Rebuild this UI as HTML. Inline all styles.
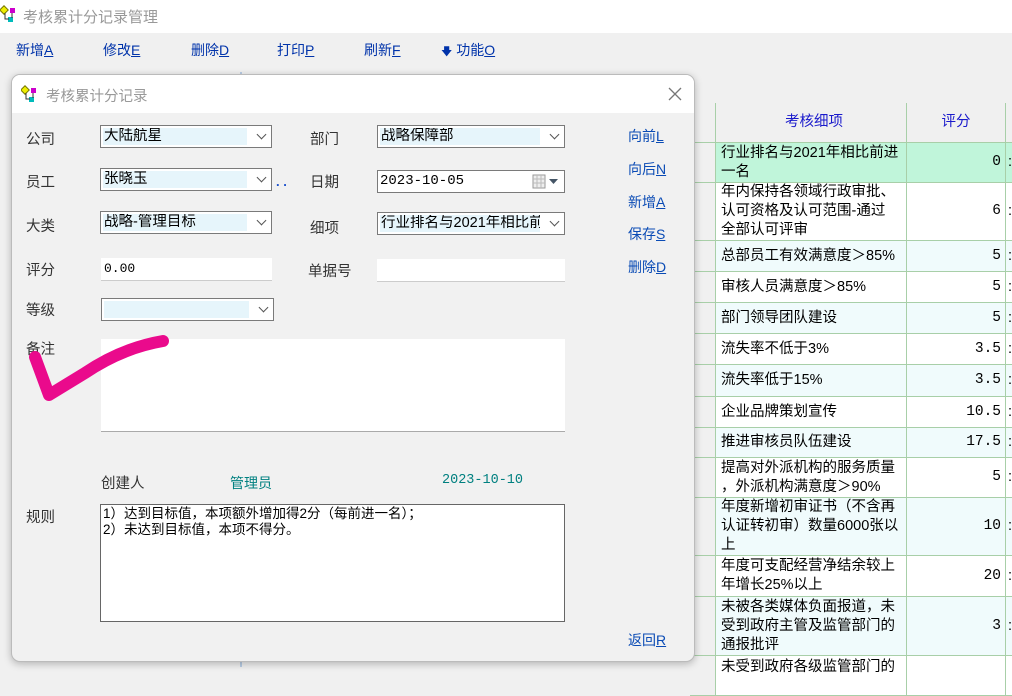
<!DOCTYPE html>
<html><head><meta charset="utf-8"><style>
*{box-sizing:border-box;margin:0;padding:0}
body{width:1012px;height:667px;overflow:hidden;background:#f0f0f0;font-family:"Liberation Sans","Noto Sans CJK SC","WenQuanYi Zen Hei",sans-serif;font-size:14px;color:#000;position:relative}
.a{position:absolute}
.title{left:0;top:0;width:1012px;height:33px;background:#fff;color:#999;font-size:15px}
.tb{top:40px;color:#0033aa;font-size:14px}
.tb u{text-decoration:underline}
.r{position:absolute;left:690px;width:330px;border-bottom:1px solid #a8cfa8;font-size:14.5px;line-height:19px;white-space:nowrap}
.r .l{position:absolute;left:0;top:0;bottom:0;width:26px;background:#f0f0f0;border-right:1px solid #a8cfa8}
.r .d{position:absolute;left:31px;top:0;bottom:0;width:186px;display:flex;align-items:center;overflow:hidden}
.r .s{position:absolute;left:216px;top:0;bottom:0;width:100px;border-left:1px solid #a8cfa8;border-right:1px solid #a8cfa8;display:flex;align-items:center;justify-content:flex-end;padding-right:4px;font-family:"Liberation Mono",monospace}
.r .x{position:absolute;left:318px;top:0;bottom:0;display:flex;align-items:center}
.dlg{left:11px;top:74px;width:684px;height:588px;background:#f1f1f1;border:1px solid #bbb;border-radius:9px;box-shadow:0 2px 8px rgba(0,0,0,.25);overflow:hidden}
.dt{left:0;top:0;width:684px;height:38px;background:#fff}
.lbl{color:#333;font-size:14.5px}
.cb{height:23px;border:1px solid #7a7a7a;background:#fff}
.cb .in{position:absolute;left:2px;top:2px;bottom:2px;right:24px;background:#e6f5fb;padding-left:1px;line-height:17px;font-size:14.5px;white-space:nowrap;overflow:hidden}
.cb .ar{position:absolute;right:6px;top:5px;width:7px;height:7px;border-right:1px solid #555;border-bottom:1px solid #555;transform:rotate(45deg)}
.tx{height:23px;background:#fff;border-bottom:1px solid #ccc}
.lk{color:#0a4bb5;font-size:14px}
.lk u{text-decoration:underline}
</style></head><body>
<div class="a title">
<svg class="a" style="left:0;top:4px" width="20" height="20"><rect x="1" y="3" width="6" height="6" fill="#ee0" stroke="#770" transform="rotate(45 4 6)"/><rect x="10" y="4" width="5" height="5" fill="#c0c"/><rect x="8" y="13" width="5" height="5" fill="#0bb"/><path d="M5 9v6h4M12 9v5" stroke="#333" fill="none"/></svg>
<span class="a" style="left:23px;top:6px">考核累计分记录管理</span></div>
<div class="a tb" style="left:16px">新增<u>A</u></div>
<div class="a tb" style="left:103px">修改<u>E</u></div>
<div class="a tb" style="left:191px">删除<u>D</u></div>
<div class="a tb" style="left:277px">打印<u>P</u></div>
<div class="a tb" style="left:364px">刷新<u>F</u></div>
<div class="a tb" style="left:441px"><span style="font-size:11px">🡇</span> 功能<u>O</u></div>
<div class="a" style="left:240px;top:72px;width:2px;height:595px;background:#b8cce4"></div>

<div class="a" style="left:690px;top:103px;width:330px;height:564px;background:#fff;border-top:1px solid #a8cfa8"></div>
<div class="r" style="top:103px;height:40px;background:#f0f0f0"><div class="l"></div><div class="d" style="justify-content:center;color:#1a1acc">考核细项</div><div class="s" style="justify-content:center;font-family:inherit;color:#1a1acc;padding:0">评分</div></div>
<div class="r" style="top:143px;height:40px;background:#c0f5da"><div class="l"></div><div class="d">行业排名与2021年相比前进<br>一名</div><div class="s">0</div><div class="x">:</div></div>
<div class="r" style="top:183px;height:58px;background:#fff"><div class="l"></div><div class="d">年内保持各领域行政审批、<br>认可资格及认可范围-通过<br>全部认可评审</div><div class="s">6</div><div class="x">:</div></div>
<div class="r" style="top:241px;height:31px;background:#f0fbfc"><div class="l"></div><div class="d">总部员工有效满意度＞85%</div><div class="s">5</div><div class="x">:</div></div>
<div class="r" style="top:272px;height:31px;background:#fff"><div class="l"></div><div class="d">审核人员满意度＞85%</div><div class="s">5</div><div class="x">:</div></div>
<div class="r" style="top:303px;height:31px;background:#f0fbfc"><div class="l"></div><div class="d">部门领导团队建设</div><div class="s">5</div><div class="x">:</div></div>
<div class="r" style="top:334px;height:31px;background:#fff"><div class="l"></div><div class="d">流失率不低于3%</div><div class="s">3.5</div><div class="x">:</div></div>
<div class="r" style="top:365px;height:32px;background:#f0fbfc"><div class="l"></div><div class="d">流失率低于15%</div><div class="s">3.5</div><div class="x">:</div></div>
<div class="r" style="top:397px;height:31px;background:#fff"><div class="l"></div><div class="d">企业品牌策划宣传</div><div class="s">10.5</div><div class="x">:</div></div>
<div class="r" style="top:428px;height:30px;background:#f0fbfc"><div class="l"></div><div class="d">推进审核员队伍建设</div><div class="s">17.5</div><div class="x">:</div></div>
<div class="r" style="top:458px;height:40px;background:#fff"><div class="l"></div><div class="d">提高对外派机构的服务质量<br>，外派机构满意度＞90%</div><div class="s">5</div><div class="x">:</div></div>
<div class="r" style="top:498px;height:58px;background:#f0fbfc"><div class="l"></div><div class="d">年度新增初审证书（不含再<br>认证转初审）数量6000张以<br>上</div><div class="s">10</div><div class="x">:</div></div>
<div class="r" style="top:556px;height:41px;background:#fff"><div class="l"></div><div class="d">年度可支配经营净结余较上<br>年增长25%以上</div><div class="s">20</div><div class="x">:</div></div>
<div class="r" style="top:597px;height:59px;background:#f0fbfc"><div class="l"></div><div class="d">未被各类媒体负面报道，未<br>受到政府主管及监管部门的<br>通报批评</div><div class="s">3</div><div class="x">:</div></div>
<div class="r" style="top:656px;height:40px;background:#fff"><div class="l"></div><div class="d" style="align-items:flex-start;padding-top:2px">未受到政府各级监管部门的</div><div class="s"></div></div>

<div class="a dlg">
<div class="a dt">
<svg class="a" style="left:9px;top:9px" width="20" height="20"><rect x="1" y="3" width="6" height="6" fill="#ee0" stroke="#770" transform="rotate(45 4 6)"/><rect x="10" y="4" width="5" height="5" fill="#c0c"/><rect x="8" y="13" width="5" height="5" fill="#0bb"/><path d="M5 9v6h4M12 9v5" stroke="#333" fill="none"/></svg>
<span class="a" style="left:34px;top:10px;color:#999;font-size:14.5px">考核累计分记录</span>
<svg class="a" style="left:655px;top:11px" width="16" height="16"><path d="M2 2L14 14M14 2L2 14" stroke="#777" stroke-width="1.3"/></svg>
</div>
<div class="a lbl" style="left:14px;top:53px">公司</div>
<div class="a lbl" style="left:14px;top:96px">员工</div>
<div class="a lbl" style="left:14px;top:140px">大类</div>
<div class="a lbl" style="left:14px;top:184px">评分</div>
<div class="a lbl" style="left:14px;top:224px">等级</div>
<div class="a lbl" style="left:14px;top:263px">备注</div>
<div class="a lbl" style="left:14px;top:431px">规则</div>

<div class="a cb" style="left:88px;top:50px;width:172px"><div class="in">大陆航星</div><div class="ar"></div></div>
<div class="a cb" style="left:88px;top:93px;width:172px"><div class="in">张晓玉</div><div class="ar"></div></div>
<div class="a" style="left:264px;top:99px;color:#1a4fcc;font-weight:bold;font-size:13px">. .</div>
<div class="a cb" style="left:88px;top:136px;width:172px"><div class="in">战略-管理目标</div><div class="ar"></div></div>
<div class="a tx" style="left:89px;top:183px;width:171px;padding:3px 3px;font-family:'Liberation Mono',monospace;font-size:13px">0.00</div>
<div class="a cb" style="left:89px;top:223px;width:173px"><div class="in"></div><div class="ar"></div></div>

<div class="a lbl" style="left:298px;top:53px">部门</div>
<div class="a lbl" style="left:298px;top:96px">日期</div>
<div class="a lbl" style="left:298px;top:142px">细项</div>
<div class="a lbl" style="left:296px;top:185px">单据号</div>
<div class="a cb" style="left:365px;top:50px;width:188px"><div class="in">战略保障部</div><div class="ar"></div></div>
<div class="a cb" style="left:365px;top:95px;width:188px;padding:2px 2px;font-family:'Liberation Mono',monospace;font-size:14px">2023-10-05
<svg class="a" style="left:154px;top:3px" width="32" height="16"><rect x="1" y="1" width="12" height="13" fill="#eee" stroke="#999"/><path d="M1 5h12M1 9h12M5 1v13M9 1v13" stroke="#bbb"/><path d="M17 5h9l-4.5 5z" fill="#456"/></svg></div>
<div class="a cb" style="left:365px;top:137px;width:188px"><div class="in">行业排名与2021年相比前</div><div class="ar"></div></div>
<div class="a tx" style="left:365px;top:184px;width:188px"></div>

<div class="a lk" style="left:616px;top:51px">向前<u>L</u></div>
<div class="a lk" style="left:616px;top:84px">向后<u>N</u></div>
<div class="a lk" style="left:616px;top:117px">新增<u>A</u></div>
<div class="a lk" style="left:616px;top:149px">保存<u>S</u></div>
<div class="a lk" style="left:616px;top:182px">删除<u>D</u></div>
<div class="a lk" style="left:616px;top:555px">返回<u>R</u></div>

<div class="a" style="left:89px;top:264px;width:464px;height:93px;background:#fff;border-bottom:1px solid #aaa"></div>
<div class="a lbl" style="left:89px;top:397px">创建人</div>
<div class="a" style="left:218px;top:398px;color:#008080">管理员</div>
<div class="a" style="left:430px;top:398px;color:#008080;font-family:'Liberation Mono',monospace;font-size:13.5px">2023-10-10</div>
<div class="a" style="left:88px;top:429px;width:465px;height:118px;background:#fff;border:1px solid #666;padding:1px 2px;font-size:13.5px;line-height:16px">1）达到目标值，本项额外增加得2分（每前进一名）；<br>2）未达到目标值，本项不得分。</div>

<svg class="a" style="left:15px;top:248px" width="145" height="90"><path d="M8 34 L22 72 L58 50 Q95 25 136 18" stroke="#ea0a8c" stroke-width="12" fill="none" stroke-linecap="round" stroke-linejoin="round"/></svg>
</div>
</body></html>
